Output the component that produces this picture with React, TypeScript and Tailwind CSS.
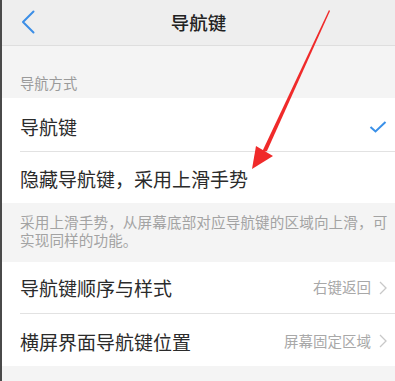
const font = { fontFamily: '"Noto Sans CJK SC", "Noto Sans", sans-serif' }

function Chevron() {
  return (
    <svg width="8" height="14" viewBox="0 0 8 14" className="ml-[8px]">
      <path d="M1 1 L7 7 L1 13" fill="none" stroke="#c8c8c8" strokeWidth="1.3" />
    </svg>
  )
}

export default function App() {
  return (
    <div
      className="relative w-[395px] h-[381px] overflow-hidden bg-[#f4f4f4] border-l-2 border-[#4a4a4a]"
      style={font}
    >
      {/* Header */}
      <div className="relative h-[46px] bg-[#eeeeee] border-b border-[#dedede] flex items-center justify-center">
        <svg className="absolute left-[19px] top-[10px]" width="14" height="24" viewBox="0 0 14 24">
          <path d="M12.5 1.5 L2 12 L12.5 22.5" fill="none" stroke="#3c8ee6" strokeWidth="2" strokeLinecap="round" strokeLinejoin="round" />
        </svg>
        <span className="text-[18.5px] font-medium text-[#222] leading-none">导航键</span>
      </div>

      {/* Section label */}
      <div className="h-[52px] flex items-end pb-[8px] pl-[18px] text-[14.3px] text-[#9a9a9a] leading-none">
        导航方式
      </div>

      {/* Options */}
      <div className="bg-white">
        <div className="h-[53px] flex items-center justify-between pl-[18px] pr-[8px] pt-[4px]">
          <span className="text-[19px] text-[#2b2b2b] leading-none">导航键</span>
          <svg width="18" height="12" viewBox="0 0 18 12">
            <path d="M1.5 6 L6.5 10.5 L16.5 1" fill="none" stroke="#3a90e8" strokeWidth="2" />
          </svg>
        </div>
        <div className="ml-[18px] h-px bg-[#e2e2e2]" />
        <div className="h-[51px] flex items-center pl-[18px] pt-[2px]">
          <span className="text-[19px] text-[#2b2b2b] leading-none">隐藏导航键，采用上滑手势</span>
        </div>
      </div>

      {/* Description */}
      <div className="h-[59px] pl-[18px] pr-[6px] pt-[10px] text-[14.6px] leading-[18px] text-[#a3a3a3] tracking-[0.1px]">
        采用上滑手势，从屏幕底部对应导航键的区域向上滑，可实现同样的功能。
      </div>

      {/* Settings */}
      <div className="bg-white">
        <div className="h-[51px] flex items-center justify-between pl-[18px] pr-[8px]">
          <span className="text-[19px] text-[#2b2b2b] leading-none">导航键顺序与样式</span>
          <div className="flex items-center">
            <span className="text-[14.5px] text-[#a8a8a8] leading-none">右键返回</span>
            <Chevron />
          </div>
        </div>
        <div className="ml-[18px] h-px bg-[#e2e2e2]" />
        <div className="h-[52px] flex items-center justify-between pl-[18px] pr-[8px] pt-[2px]">
          <span className="text-[19px] text-[#2b2b2b] leading-none">横屏界面导航键位置</span>
          <div className="flex items-center">
            <span className="text-[14.5px] text-[#a8a8a8] leading-none">屏幕固定区域</span>
            <Chevron />
          </div>
        </div>
      </div>

      {/* Red annotation arrow */}
      <svg className="absolute left-0 top-0 pointer-events-none" width="395" height="381" viewBox="0 0 395 381">
        <polygon points="327,10 328,11 265,151 260,152" fill="#f02a2a" />
        <polygon points="250,169 254,146 271,156" fill="#f02a2a" />
      </svg>
    </div>
  )
}
